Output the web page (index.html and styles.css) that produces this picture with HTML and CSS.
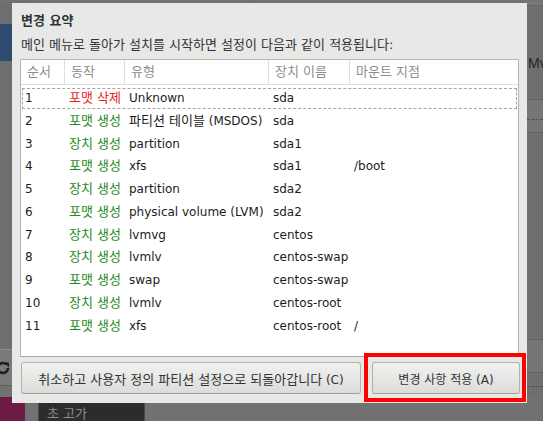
FILE: index.html
```html
<!DOCTYPE html>
<html lang="ko">
<head>
<meta charset="utf-8">
<title>변경 요약</title>
<link rel="stylesheet" href="styles.css">
</head>
<body>
<div class="screen">
  <div class="top-band">
    <span class="crumb">CENTOS 7 설치</span>
    <span class="top-sep"></span>
    <span class="top-dev">sda1</span>
  </div>
  <div class="mid-band">
    <aside class="side">
      <div class="side-gap1"></div>
      <div class="side-blue"></div>
      <div class="side-gap2"></div>
      <div class="side-tools">
        <svg class="refresh" width="16" height="16" viewBox="0 0 16 16"><path d="M13 8a5 5 0 1 1-1.6-3.7" fill="none" stroke="#1e1e1e" stroke-width="2.6"/><path d="M9 2.5h5v5z" fill="#1e1e1e"/></svg>
      </div>
    </aside>
    <div class="center"></div>
    <aside class="right">
      <div class="r-top"></div>
      <div class="r-a"><span class="mv">Mv</span></div>
      <div class="r-band"><span class="dash"></span></div>
      <div class="r-b"></div>
      <div class="r-band2"></div>
      <div class="r-c"><span class="dash"></span></div>
    </aside>
  </div>
  <div class="bottom-band">
    <div class="magenta"></div>
    <div class="dark-box"><span>초 고가</span></div>
  </div>
</div>

<div class="dialog">
  <h1 class="title">변경 요약</h1>
  <p class="subtitle">메인 메뉴로 돌아가 설치를 시작하면 설정이 다음과 같이 적용됩니다:</p>
  <div class="table">
    <div class="thead">
      <div class="th">순서</div>
      <div class="th">동작</div>
      <div class="th">유형</div>
      <div class="th">장치 이름</div>
      <div class="th last">마운트 지점</div>
    </div>
    <div class="tbody">
      <div class="row focused"><span>1</span><span class="act del">포맷 삭제</span><span>Unknown</span><span>sda</span><span></span></div>
      <div class="row"><span>2</span><span class="act add">포맷 생성</span><span><span class="ko">파티션 테이블</span> (MSDOS)</span><span>sda</span><span></span></div>
      <div class="row"><span>3</span><span class="act add">장치 생성</span><span>partition</span><span>sda1</span><span></span></div>
      <div class="row"><span>4</span><span class="act add">포맷 생성</span><span>xfs</span><span>sda1</span><span>/boot</span></div>
      <div class="row"><span>5</span><span class="act add">장치 생성</span><span>partition</span><span>sda2</span><span></span></div>
      <div class="row"><span>6</span><span class="act add">포맷 생성</span><span>physical volume (LVM)</span><span>sda2</span><span></span></div>
      <div class="row"><span>7</span><span class="act add">장치 생성</span><span>lvmvg</span><span>centos</span><span></span></div>
      <div class="row"><span>8</span><span class="act add">장치 생성</span><span>lvmlv</span><span>centos-swap</span><span></span></div>
      <div class="row"><span>9</span><span class="act add">포맷 생성</span><span>swap</span><span>centos-swap</span><span></span></div>
      <div class="row"><span>10</span><span class="act add">장치 생성</span><span>lvmlv</span><span>centos-root</span><span></span></div>
      <div class="row"><span>11</span><span class="act add">포맷 생성</span><span>xfs</span><span>centos-root</span><span>/</span></div>
    </div>
  </div>
  <div class="buttons">
    <button class="btn cancel"><span class="ko">취소하고 사용자 정의 파티션 설정으로 되돌아갑니다</span> (C)</button>
    <button class="btn apply">변경 사항 적용 (A)</button>
  </div>
  <div class="highlight"></div>
</div>
</body>
</html>
```

FILE: styles.css
```css
* { box-sizing: border-box; }

html, body {
  margin: 0;
  padding: 0;
}

body {
  width: 543px;
  height: 421px;
  overflow: hidden;
  position: relative;
  background: #717171;
  font-family: "DejaVu Sans", "Noto Sans CJK KR", sans-serif;
  font-size: 12px;
  color: #1c1c1c;
}

.ko { font-size: 13px; }

/* ---------- dimmed background screen ---------- */
.screen {
  height: 421px;
  display: flex;
  flex-direction: column;
}

.top-band {
  height: 10px;
  display: flex;
  align-items: flex-end;
  overflow: hidden;
  background: #737373;
}

.crumb {
  font-size: 17px;
  font-weight: bold;
  line-height: 20px;
  color: #2b2b2b;
  margin-left: -44px;
  margin-bottom: 1px;
  white-space: nowrap;
}

.top-sep {
  width: 1px;
  height: 10px;
  background: #5e5e5e;
  margin-left: 163px;
}

.top-dev {
  font-size: 13px;
  line-height: 16px;
  color: #2b2b2b;
  margin-left: 24px;
  margin-bottom: 3px;
}

.mid-band {
  height: 395px;
  display: flex;
}

.side {
  width: 25px;
  display: flex;
  flex-direction: column;
}

.side-gap1 { height: 23px; background: #6e6e6e; }
.side-blue { height: 37px; background: #2e4b6f; }
.side-gap2 { height: 288px; background: #6e6e6e; }
.side-tools {
  height: 37px;
  background: #7a7a7a;
  border-top: 1px solid #8a8a8a;
  border-bottom: 1px solid #5f5f5f;
  display: flex;
  align-items: center;
}
.refresh { margin-left: -5px; }

.center { flex: 1; }

.right {
  width: 16px;
  display: flex;
  flex-direction: column;
}
.r-top { height: 5px; background: #787878; border-bottom: 1px solid #646464; }
.r-a {
  height: 93px;
  background: #6f6f6f;
  padding-top: 50px;
}
.mv {
  display: block;
  font-family: "Liberation Sans", sans-serif;
  font-size: 14px;
  line-height: 14px;
  color: #252525;
  margin-left: 1px;
  white-space: nowrap;
}
.r-band {
  height: 34px;
  background: #767676;
  border-top: 1px solid #5e5e5e;
  border-bottom: 1px solid #5e5e5e;
  padding-top: 19px;
}
.dash {
  display: block;
  height: 0;
  border-top: 1px dashed #4e4e4e;
}
.r-b { height: 206px; background: #6f6f6f; }
.r-band2 {
  height: 34px;
  background: #767676;
  border-top: 1px solid #5e5e5e;
  border-bottom: 1px solid #5e5e5e;
}
.r-c { height: 23px; background: #6f6f6f; padding-top: 13px; }

.bottom-band {
  flex: 1;
  display: flex;
  padding-top: 1px;
  background: #717171;
}
.magenta { width: 25px; background: #6d1a45; }
.dark-box {
  width: 107px;
  margin-left: 13px;
  background: #2c2c2c;
  border: 1px solid #4a4a4a;
  border-bottom: none;
  padding: 9px 0 0 8px;
  color: #8d8d8d;
  font-size: 13px;
  line-height: 14px;
  white-space: nowrap;
}

/* ---------- dialog ---------- */
.dialog {
  position: absolute;
  left: 12px;
  top: 3px;
  width: 515px;
  height: 400px;
  background: #e8e8e7;
  padding: 9px 7px 9px 8px;
  display: flex;
  flex-direction: column;
}

.title {
  margin: 0;
  padding-left: 1px;
  font-size: 13px;
  font-weight: bold;
  line-height: 17px;
  color: #2e3436;
}

.subtitle {
  margin: 7px 0 0 0;
  padding-left: 1px;
  font-size: 13px;
  line-height: 17px;
  color: #2e3436;
}

.table {
  margin-top: 6px;
  width: 499px;
  height: 298px;
  background: #ffffff;
  border: 1px solid #b6b6b3;
  border-bottom-color: #a8a8a6;
}

.thead {
  display: grid;
  grid-template-columns: 44px 60px 144px 81px 1fr;
  height: 25px;
  border-bottom: 1px solid #dedede;
}

.th {
  border-right: 1px solid #dedede;
  padding-left: 6px;
  line-height: 24px;
  color: #8d8d8d;
  font-size: 13px;
  white-space: nowrap;
}
.th.last { border-right: none; }

.tbody {
  padding-top: 2px;
}

.row {
  display: grid;
  grid-template-columns: 44px 60px 144px 81px 1fr;
  height: 22.75px;
  line-height: 22px;
  white-space: nowrap;
}
.row > span { padding-left: 4px; }

.act { font-size: 13px; }

.row.focused {
  outline: 1px dashed #a4a4a4;
  outline-offset: -2px;
}

.del { color: #ee1c1c; }
.add { color: #1f8a21; }

.buttons {
  margin-top: 5px;
  display: flex;
  gap: 11px;
  padding-left: 1px;
}

.btn {
  height: 32px;
  font-family: "DejaVu Sans", "Noto Sans CJK KR", sans-serif;
  font-size: 12px;
  color: #2e3436;
  background: linear-gradient(#f1f1f0, #dcdcda);
  border: 1px solid #b1b1ae;
  border-bottom-color: #a2a29f;
  border-radius: 3px;
  padding: 0;
}
.cancel { width: 340px; }
.apply { width: 148px; }

.highlight {
  position: absolute;
  left: 352px;
  top: 350px;
  width: 162px;
  height: 49px;
  border: 4px solid #ff0000;
}
```
